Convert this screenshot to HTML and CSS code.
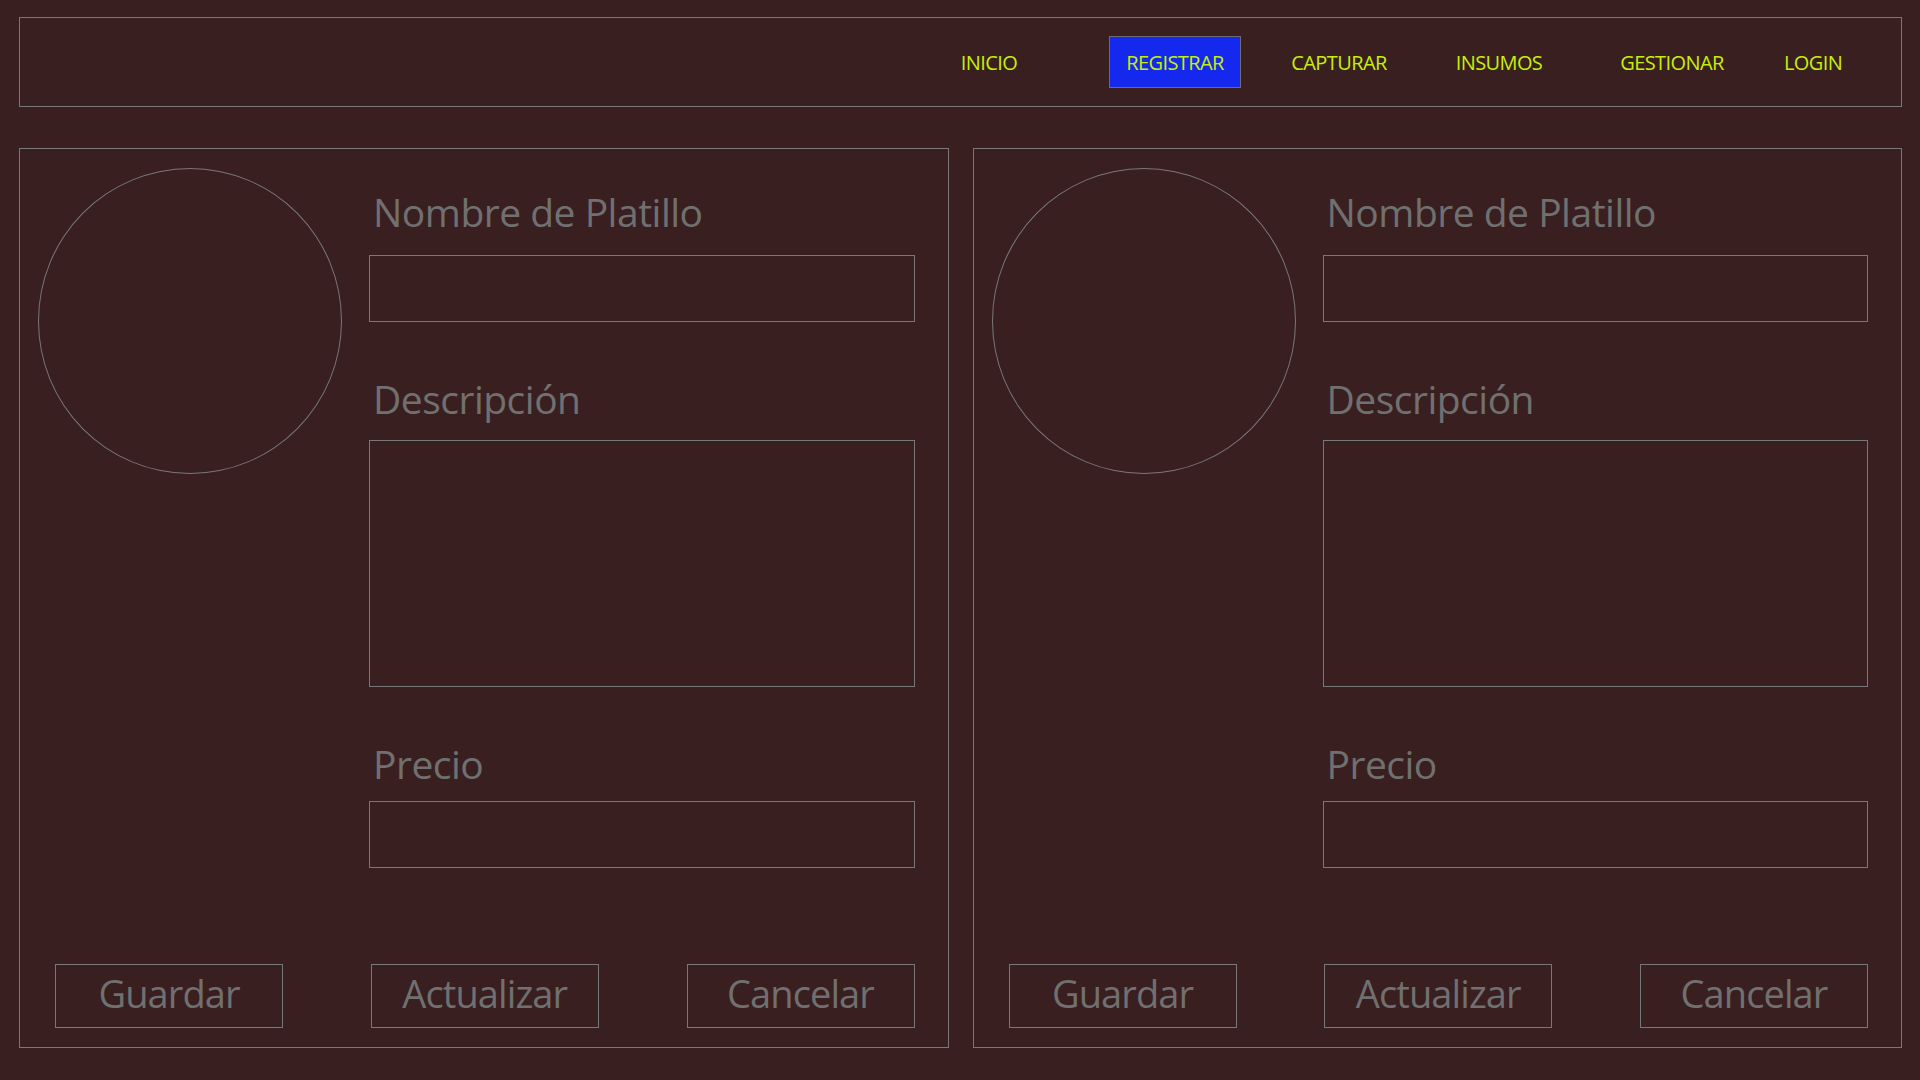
FILE: index.html
```html
<!DOCTYPE html>
<html lang="es">
<head>
<meta charset="utf-8">
<title>Registrar platillo</title>
<link rel="stylesheet" href="styles.css">
</head>
<body>
<header class="topbar">
  <nav class="menu">
    <a class="menu-item item-inicio" href="#">INICIO</a>
    <a class="menu-item item-registrar is-active" href="#">REGISTRAR</a>
    <a class="menu-item item-capturar" href="#">CAPTURAR</a>
    <a class="menu-item item-insumos" href="#">INSUMOS</a>
    <a class="menu-item item-gestionar" href="#">GESTIONAR</a>
    <a class="menu-item item-login" href="#">LOGIN</a>
  </nav>
</header>
<main class="workspace">
  <section class="card">
    <div class="card-body">
      <div class="photo"></div>
      <form class="fields">
        <label class="field-label label-first">Nombre de Platillo</label>
        <input class="field-input" type="text">
        <label class="field-label label-desc">Descripción</label>
        <textarea class="field-area"></textarea>
        <label class="field-label label-price">Precio</label>
        <input class="field-input" type="text">
      </form>
    </div>
    <div class="actions">
      <button class="action" type="button">Guardar</button>
      <button class="action" type="button">Actualizar</button>
      <button class="action" type="button">Cancelar</button>
    </div>
  </section>
  <section class="card">
    <div class="card-body">
      <div class="photo"></div>
      <form class="fields">
        <label class="field-label label-first">Nombre de Platillo</label>
        <input class="field-input" type="text">
        <label class="field-label label-desc">Descripción</label>
        <textarea class="field-area"></textarea>
        <label class="field-label label-price">Precio</label>
        <input class="field-input" type="text">
      </form>
    </div>
    <div class="actions">
      <button class="action" type="button">Guardar</button>
      <button class="action" type="button">Actualizar</button>
      <button class="action" type="button">Cancelar</button>
    </div>
  </section>
</main>
</body>
</html>
```
FILE: styles.css
```css
* {
  box-sizing: border-box;
}

html, body {
  height: 100%;
}

body {
  margin: 0;
  padding: 17px 18px 32px 19px;
  background: #3a1f20;
  font-family: "Open Sans", "Noto Sans", sans-serif;
  display: flex;
  flex-direction: column;
}

.topbar {
  height: 90px;
  border: 1px solid #787878;
  flex: none;
}

.menu {
  height: 100%;
  display: flex;
  align-items: center;
  justify-content: flex-end;
  padding-right: 22px;
  padding-top: 2px;
}

.menu-item {
  width: 132px;
  height: 52px;
  line-height: 50px;
  text-align: center;
  color: #c6ef0a;
  text-decoration: none;
  font-size: 20px;
  letter-spacing: -0.6px;
  border: 1px solid transparent;
}

.item-registrar { margin-left: 54px; }
.item-capturar { margin-left: 32px; }
.item-insumos { margin-left: 28px; }
.item-gestionar { margin-left: 41px; }
.item-login { margin-left: 9px; }

.menu-item.is-active {
  background: #1428ee;
  border-color: #6c6c70;
  margin-top: -2px;
  line-height: 52px;
}

.workspace {
  flex: 1;
  display: flex;
  gap: 24px;
  margin-top: 41px;
}

.card {
  flex: 1;
  border: 1px solid #787878;
  padding: 19px 33px 19px 18px;
  display: flex;
  flex-direction: column;
}

.card-body {
  display: grid;
  grid-template-columns: 304px 1fr;
  column-gap: 27px;
  align-items: start;
}

.photo {
  width: 304px;
  height: 306px;
  border: 1px solid #787878;
  border-radius: 50%;
}

.fields {
  display: flex;
  flex-direction: column;
  margin: 0;
}

.field-label {
  font-size: 39px;
  line-height: 48px;
  color: #707070;
  padding-left: 4px;
  letter-spacing: -0.5px;
}

.label-first { margin-top: 20px; margin-bottom: 19px; }
.label-desc { margin-top: 53px; margin-bottom: 17px; }
.label-price { margin-top: 53px; margin-bottom: 13px; }

.field-input,
.field-area {
  display: block;
  width: 100%;
  margin: 0;
  background: transparent;
  border: 1px solid #787878;
  border-radius: 0;
  font: inherit;
  color: #707070;
}

.field-input {
  height: 67px;
}

.field-area {
  height: 247px;
  resize: none;
}

.actions {
  margin-top: auto;
  display: flex;
  justify-content: space-between;
  padding-left: 17px;
}

.action {
  width: 228px;
  height: 64px;
  padding: 0 0 6px;
  background: transparent;
  border: 1px solid #787878;
  border-radius: 0;
  color: #707070;
  font-family: inherit;
  font-size: 38px;
  letter-spacing: -0.9px;
  line-height: 56px;
}
```
